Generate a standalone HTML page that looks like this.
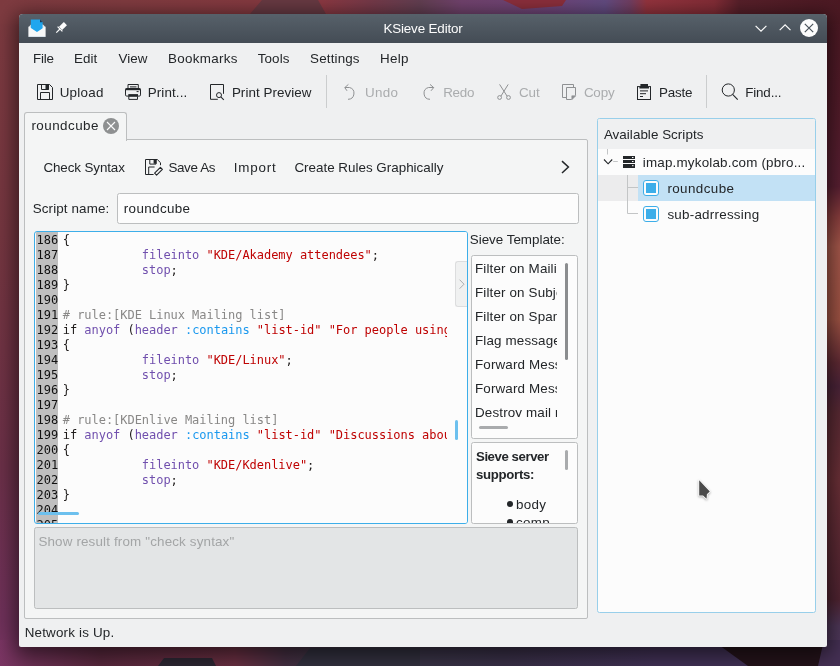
<!DOCTYPE html>
<html>
<head>
<meta charset="utf-8">
<title>KSieve Editor</title>
<style>
html,body{margin:0;padding:0;}
body{width:840px;height:666px;overflow:hidden;position:relative;background:#3a1a28;
 font-family:"Liberation Sans",sans-serif;font-size:13.4px;color:#232629;}
#ui{position:absolute;left:0;top:0;width:840px;height:666px;will-change:transform;}
#wall{position:absolute;left:0;top:0;width:840px;height:666px;}
#win{position:absolute;left:19px;top:14px;width:808px;height:633px;background:#eff0f1;border-radius:4px 4px 2px 2px;
 box-shadow:0 4px 20px 4px rgba(0,0,0,0.55);}
#title{position:absolute;left:19px;top:14px;width:808px;height:29px;border-radius:4px 4px 0 0;
 background:linear-gradient(#57616a,#444c55);}
.t{position:absolute;white-space:nowrap;line-height:16px;font-size:13.4px;}
.dis{color:#aaacae;}
.ic{position:absolute;width:16px;height:16px;overflow:visible;}
.sep{position:absolute;width:1px;background:#cbcdce;}
#panel{position:absolute;left:24px;top:139px;width:562px;height:478px;border:1px solid #bcbebf;border-radius:2px;background:#f4f5f5;}
#tab{position:absolute;left:24px;top:112px;width:101px;height:28px;border:1px solid #bcbebf;border-bottom:none;border-radius:3px 3px 0 0;background:#f4f5f5;}
#editor{position:absolute;left:34px;top:231px;width:432px;height:291px;border:1px solid #3daee9;border-radius:3px;background:#fcfcfc;overflow:hidden;}
#gutter{position:absolute;left:1px;top:0px;width:22px;height:291px;background:#bfbfbf;}
.code{position:absolute;top:1px;font-family:"DejaVu Sans Mono","Liberation Mono",monospace;font-size:12px;line-height:15px;white-space:pre;color:#1f1c1b;}
.code div{height:15px;}
.ln{left:1.5px;color:#111;}
.src{left:27.8px;letter-spacing:-0.04px;}
.kw{color:#7150ae;}.tg{color:#1a98ee;}.st{color:#bf0303;}.cm{color:#898887;}
.box{position:absolute;border:1px solid #bcbebf;border-radius:2.5px;background:#fcfcfc;overflow:hidden;}
.li{position:absolute;left:3px;white-space:nowrap;line-height:16px;font-size:13.4px;letter-spacing:0.15px;}
.sb{position:absolute;background:#8b8d8f;border-radius:2px;}
</style>
</head>

<body>
<svg id="wall" width="840" height="666" viewBox="0 0 840 666">
 <defs>
  <linearGradient id="gl" x1="0" y1="0" x2="0" y2="1">
   <stop offset="0" stop-color="#7e3b40"/><stop offset="0.35" stop-color="#753640"/><stop offset="0.7" stop-color="#6b3048"/><stop offset="0.93" stop-color="#6f315a"/><stop offset="1" stop-color="#7a3563"/>
  </linearGradient>
  <linearGradient id="gt" x1="0" y1="0" x2="1" y2="0">
   <stop offset="0" stop-color="#7e3b40"/><stop offset="0.15" stop-color="#823c41"/><stop offset="0.30" stop-color="#863a41"/>
   <stop offset="0.385" stop-color="#8c3943"/>
   <stop offset="0.44" stop-color="#773a49"/><stop offset="0.50" stop-color="#633f52"/><stop offset="0.55" stop-color="#72436e"/><stop offset="0.66" stop-color="#6e4579"/>
   <stop offset="0.72" stop-color="#634c82"/>
   <stop offset="0.75" stop-color="#723f63"/><stop offset="0.77" stop-color="#95343e"/><stop offset="0.85" stop-color="#842d37"/>
   <stop offset="0.88" stop-color="#58202a"/><stop offset="1" stop-color="#4c1923"/>
  </linearGradient>
  <linearGradient id="gr" x1="0" y1="0" x2="0" y2="1">
   <stop offset="0" stop-color="#4c1923"/><stop offset="0.15" stop-color="#521b29"/><stop offset="0.28" stop-color="#5a2033"/><stop offset="0.325" stop-color="#8a3e3e"/>
   <stop offset="0.37" stop-color="#a6584b"/><stop offset="0.48" stop-color="#9f5344"/><stop offset="0.545" stop-color="#602a34"/><stop offset="0.58" stop-color="#4b2439"/>
   <stop offset="0.62" stop-color="#5a2a34"/><stop offset="0.72" stop-color="#6b3037"/><stop offset="0.90" stop-color="#502432"/><stop offset="0.94" stop-color="#4e3758"/><stop offset="1" stop-color="#4f385e"/>
  </linearGradient>
  <linearGradient id="gb" x1="0" y1="0" x2="1" y2="0">
   <stop offset="0" stop-color="#7a3563"/><stop offset="0.04" stop-color="#6a2f52"/><stop offset="0.12" stop-color="#57273c"/><stop offset="0.28" stop-color="#672e40"/>
   <stop offset="0.34" stop-color="#432e40"/><stop offset="0.42" stop-color="#383544"/><stop offset="0.60" stop-color="#382f46"/><stop offset="0.78" stop-color="#403054"/>
   <stop offset="0.9" stop-color="#403054"/><stop offset="0.965" stop-color="#453054"/><stop offset="1" stop-color="#453054"/>
  </linearGradient>
 </defs>
 <rect x="0" y="0" width="840" height="666" fill="#3a1a28"/>
 <rect x="0" y="0" width="30" height="666" fill="url(#gl)"/>
 <rect x="810" y="0" width="30" height="666" fill="url(#gr)"/>
 <rect x="0" y="0" width="840" height="24" fill="url(#gt)"/>
 <rect x="0" y="640" width="840" height="26" fill="url(#gb)"/>
 <polygon points="262,0 318,0 326,14 250,14" fill="#683a43"/>
 <polygon points="503,0 566,0 562,6 522,9" fill="#8c2f3c"/>
 <polygon points="712,640 824,640 818,666 748,666" fill="#24131a"/>
 <polygon points="158,666 164,658 212,658 216,666" fill="#2c2632"/>
 <polygon points="296,666 310,648 420,648 420,666" fill="#32303e"/>
</svg>
<div id="ui">
<div id="win"></div>
<div id="title"></div>
<!-- toolbar separators -->
<div class="sep" style="left:326px;top:75px;height:33px"></div>
<div class="sep" style="left:706px;top:75px;height:33px"></div>
<!-- tab widget -->
<div id="panel"></div>
<div id="tab"></div>
<!-- script name input -->
<div class="box" style="left:117px;top:193px;width:460px;height:29px"></div>
<!-- editor -->
<div id="editor">
 <div id="gutter"></div>
 <div class="code ln"><div>186</div><div>187</div><div>188</div><div>189</div><div>190</div><div>191</div><div>192</div><div>193</div><div>194</div><div>195</div><div>196</div><div>197</div><div>198</div><div>199</div><div>200</div><div>201</div><div>202</div><div>203</div><div>204</div><div>205</div></div>
 <div class="code src"><div>{</div><div>           <span class="kw">fileinto</span> <span class="st">"KDE/Akademy attendees"</span>;</div><div>           <span class="kw">stop</span>;</div><div>}</div><div> </div><div><span class="cm"># rule:[KDE Linux Mailing list]</span></div><div>if <span class="kw">anyof</span> (<span class="kw">header</span> <span class="tg">:contains</span> <span class="st">"list-id"</span> <span class="st">"For people using Linux"</span>)</div><div>{</div><div>           <span class="kw">fileinto</span> <span class="st">"KDE/Linux"</span>;</div><div>           <span class="kw">stop</span>;</div><div>}</div><div> </div><div><span class="cm"># rule:[KDEnlive Mailing list]</span></div><div>if <span class="kw">anyof</span> (<span class="kw">header</span> <span class="tg">:contains</span> <span class="st">"list-id"</span> <span class="st">"Discussions about Kdenlive"</span>)</div><div>{</div><div>           <span class="kw">fileinto</span> <span class="st">"KDE/Kdenlive"</span>;</div><div>           <span class="kw">stop</span>;</div><div>}</div><div> </div><div> </div></div>
 <div style="position:absolute;left:412px;top:0;width:20px;height:291px;background:#fcfcfc"></div>
 <div style="position:absolute;left:420px;top:188px;width:3px;height:20px;background:#6cc0ee;border-radius:1.5px"></div>
 <div style="position:absolute;left:3px;top:280px;width:41px;height:3px;background:#6cc0ee;border-radius:1.5px"></div>
</div>
<!-- splitter handle -->
<div style="position:absolute;left:455px;top:261px;width:12px;height:46px;border:1px solid #dcddde;border-right:none;border-radius:3px 0 0 3px;background:#f0f1f1;box-sizing:border-box"></div>
<svg class="ic" style="left:457px;top:277px;width:8px;height:14px" viewBox="0 0 8 14"><path d="M2.6 2.7 L7 7.2 L2.6 11.7" fill="none" stroke="#abadaf" stroke-width="1"/></svg>
<!-- template list -->
<div class="box" style="left:471px;top:255px;width:105px;height:182px">
 <div style="position:absolute;left:0;top:0;width:85px;height:161px;overflow:hidden">
  <div class="li" style="top:5px">Filter on Mailing List</div>
  <div class="li" style="top:29px">Filter on Subject</div>
  <div class="li" style="top:53px">Filter on Spamassassin</div>
  <div class="li" style="top:77px">Flag messages</div>
  <div class="li" style="top:101px">Forward Message</div>
  <div class="li" style="top:125px">Forward Message and add copy</div>
  <div class="li" style="top:149px">Destroy mail posted by</div>
 </div>
 <div class="sb" style="left:93px;top:7px;width:3px;height:97px"></div>
 <div class="sb" style="left:7px;top:170px;width:29px;height:3px;background:#a9abad"></div>
</div>
<!-- server supports -->
<div class="box" style="left:471px;top:442px;width:105px;height:80px">
 <div class="li" style="left:4px;top:6px;font-weight:bold;font-size:13.2px;letter-spacing:-0.42px">Sieve server</div>
 <div class="li" style="left:4px;top:24px;font-weight:bold;font-size:13.2px;letter-spacing:-0.3px">supports:</div>
 <div style="position:absolute;left:35px;top:57.5px;width:6px;height:6px;border-radius:3px;background:#232629"></div>
 <div class="li" style="left:44px;top:54px;letter-spacing:0.3px">body</div>
 <div style="position:absolute;left:35px;top:75.5px;width:6px;height:6px;border-radius:3px;background:#232629"></div>
 <div class="li" style="left:44px;top:72px;letter-spacing:0.3px">comp</div>
 <div class="sb" style="left:93px;top:7px;width:3px;height:20px;background:#a9abad"></div>
</div>
<!-- result box -->
<div class="box" style="left:34px;top:527px;width:542px;height:80px;background:#e3e5e6"></div>
<!-- scripts panel -->
<div style="position:absolute;left:597px;top:118px;width:217px;height:493px;border:1px solid #98cfea;border-radius:2.5px;background:#fcfcfc;overflow:hidden;box-sizing:content-box">
 <div style="position:absolute;left:0;top:0;width:218px;height:30px;background:#eff0f1"></div>
 <div style="position:absolute;left:0;top:56px;width:40px;height:26px;background:#ececed"></div>
 <div style="position:absolute;left:40px;top:56px;width:178px;height:26px;background:#c2e1f5"></div>
</div>
<svg id="icons" width="840" height="666" viewBox="0 0 840 666" style="position:absolute;left:0;top:0;pointer-events:none">
 <g fill="none" stroke="#232629" stroke-width="1">
  <!-- save (Upload) -->
  <path d="M37.5 84.5 H49.5 L52.5 87.5 V99.5 H37.5 Z"/>
  <path d="M41.5 85 V89.5 H48.5 V85"/>
  <rect x="45.5" y="84.5" width="3.5" height="5" fill="#232629" stroke="none"/>
  <path d="M40.5 99 V92.5 H49.5 V99"/>
  <!-- print -->
  <path d="M128 88.5 V84.5 H138.3 V88.5"/>
  <path d="M130 86.9 H136.5"/>
  <rect x="125.5" y="88.5" width="15" height="7.6" rx="1.2"/>
  <path d="M125.5 89.3 H140.5" stroke-width="1.8"/>
  <path d="M136.6 91.6 H138.6"/>
  <rect x="128.3" y="94.1" width="9.7" height="2.4" fill="#232629" stroke="none"/>
  <path d="M128.8 96.5 V99.4 H137.5 V96.5"/>
  <!-- print preview -->
  <path d="M217.8 99.3 H210.5 V84.5 H223.5 V93.8"/>
  <circle cx="219" cy="95.1" r="2.5"/>
  <path d="M220.8 96.9 L223.8 99.8" stroke-width="1.1"/>
  <!-- paste -->
  <rect x="637.5" y="86.6" width="13" height="12.9"/>
  <path d="M640.4 84 H648 V87 H649 V88.6 H639.4 V87 H640.4 Z" fill="#232629" stroke="none"/>
  <path d="M640 90.9 H648 M640 93.7 H646 M640 96.5 H643"/>
  <!-- find -->
  <circle cx="728.3" cy="90" r="6.1"/>
  <path d="M732.6 94.4 L737.7 99.7" stroke-width="1.1"/>
  <!-- save as -->
  <path d="M153.6 174.5 H145.5 V159.5 H157.3 L160.5 162.7 V165.2"/>
  <path d="M149.8 160 V164.1 H156 V160"/>
  <rect x="153.6" y="159.5" width="2.9" height="4.2" fill="#232629" stroke="none"/>
  <path d="M148.7 174 V167 H154.6"/>
  <path d="M160.4 167.4 L162.4 169.4 L156.6 175.2 L154.6 173.2 Z" stroke-width="1.1" stroke-linejoin="round"/>
  <!-- panel chevron -->
  <path d="M562 161.1 L568.4 167 L562 173" stroke-width="1.5"/>
  <!-- tree expander -->
  <path d="M604 159.5 L608.1 163.8 L612.2 159.5" stroke-width="1.1"/>
 </g>
 <!-- disabled icons -->
 <g fill="none" stroke="#8f9193" stroke-width="1">
  <path d="M348.4 84.4 L344.8 87.6 L347 90.8"/>
  <path d="M344.8 87.5 H349.5 A6 6 0 0 1 348 99.3"/>
  <path d="M430 84.4 L433.7 87.6 L431 90.8"/>
  <path d="M433.7 87.5 H428.5 A6 6 0 0 0 430 99.3"/>
  <!-- cut -->
  <path d="M499.6 84.4 L507 96 M508.2 84.4 L501 96"/>
  <circle cx="499.6" cy="97.5" r="1.9"/>
  <circle cx="508.5" cy="97.5" r="1.9"/>
  <!-- copy -->
  <path d="M566 97.5 H562.5 V84.5 H573.5 V87"/>
  <path d="M571.5 99.5 H566.5 V87.5 H575.5 V95.5"/>
  <path d="M571.8 99.8 V95.8 H575.8 Z" fill="#8f9193" stroke-width="0.6"/>
 </g>
 <!-- tab close -->
 <circle cx="111" cy="126" r="8" fill="#8e9091"/>
 <path d="M107 122 L115 130 M115 122 L107 130" stroke="#fcfcfc" stroke-width="1.1" fill="none"/>
 <!-- title bar: app icon -->
 <path d="M28.6 27 L31 24.5 H43 L45.4 27 V36.8 H28.6 Z" fill="#e4e6e8"/>
 <path d="M30.8 19.6 H40 L42.6 22.2 V32 H30.8 Z" fill="#1fa6ee"/>
 <path d="M40 19.6 L42.6 22.2 H40 Z" fill="#1d3a55"/>
 <path d="M28.6 26.6 L37 32 L45.4 26.6 V36.8 H28.6 Z" fill="#f7f8f8"/>
 <path d="M28.6 36.3 H45.4 V36.8 H28.6 Z" fill="#c9dcea"/>
 <!-- pin -->
 <g stroke="#fcfcfc" fill="none">
  <path d="M56.3 32.7 L60 29" stroke-width="1.2"/>
  <path d="M57.6 26.6 L62.4 31.4" stroke-width="1.3"/>
  <path d="M60.6 28.4 L65.4 23.6" stroke-width="4.4"/>
 </g>
 <!-- title buttons -->
 <g stroke="#fcfcfc" fill="none" stroke-width="1.2">
  <path d="M755.6 25.8 L761 31.2 L766.4 25.8"/>
  <path d="M779.7 30.2 L785.1 24.8 L790.5 30.2"/>
 </g>
 <circle cx="809" cy="28" r="9" fill="#fcfcfc"/>
 <path d="M804.8 23.8 L813.2 32.2 M813.2 23.8 L804.8 32.2" stroke="#4a535b" stroke-width="1.2" fill="none"/>
 <!-- tree lines -->
 <g stroke="#c3c5c6" stroke-width="1" fill="none">
  <path d="M607.5 149 V154.5 M613.2 161.5 H617.8"/>
  <path d="M627.5 175 V213.5 H638 M627.5 187.5 H638"/>
 </g>
 <!-- server icon -->
 <rect x="623" y="156" width="12" height="12" fill="#232629"/>
 <path d="M623 159.5 H635 M623 163.5 H635" stroke="#fcfcfc" stroke-width="1"/>
 <path d="M632 157.5 H633.5 M632 161.5 H633.5 M632 165.7 H633.5" stroke="#fcfcfc" stroke-width="1"/>
 <!-- checkboxes -->
 <rect x="643.5" y="180.5" width="15" height="15" rx="2.5" fill="#fcfcfc" stroke="#3daee9"/>
 <rect x="646" y="183" width="10" height="10" fill="#3daee9"/>
 <rect x="643.5" y="206.5" width="15" height="15" rx="2.5" fill="#fcfcfc" stroke="#3daee9"/>
 <rect x="646" y="209" width="10" height="10" fill="#3daee9"/>
<!-- mouse cursor -->
 <path d="M699.2 480.3 L709.8 491.5 L706.9 494.2 L706.6 498.7 L703 495.4 H699.2 Z" fill="#4b4b4b" stroke="#ffffff" stroke-width="1.6" stroke-linejoin="round" paint-order="stroke" style="filter:drop-shadow(0 1px 1.2px rgba(0,0,0,0.3))"/>
</svg>

<div class="t" style="left:383.4px;top:21.0px;letter-spacing:-0.142px;color:#fcfcfc">KSieve Editor</div>
<div class="t" style="left:32.9px;top:51.0px;letter-spacing:-0.195px;">File</div>
<div class="t" style="left:73.9px;top:51.0px;letter-spacing:0.105px;">Edit</div>
<div class="t" style="left:118.4px;top:51.0px;letter-spacing:0.051px;">View</div>
<div class="t" style="left:168.1px;top:51.0px;letter-spacing:0.291px;">Bookmarks</div>
<div class="t" style="left:257.7px;top:51.0px;letter-spacing:0.147px;">Tools</div>
<div class="t" style="left:310.1px;top:51.0px;letter-spacing:0.151px;">Settings</div>
<div class="t" style="left:380.1px;top:51.0px;letter-spacing:0.263px;">Help</div>
<div class="t" style="left:59.7px;top:85.0px;letter-spacing:0.260px;">Upload</div>
<div class="t" style="left:147.7px;top:85.0px;letter-spacing:0.125px;">Print...</div>
<div class="t" style="left:231.9px;top:85.0px;letter-spacing:0.047px;">Print Preview</div>
<div class="t dis" style="left:364.9px;top:85.0px;letter-spacing:0.371px;">Undo</div>
<div class="t dis" style="left:443.2px;top:85.0px;letter-spacing:-0.254px;">Redo</div>
<div class="t dis" style="left:518.9px;top:85.0px;letter-spacing:0.052px;">Cut</div>
<div class="t dis" style="left:583.9px;top:85.0px;letter-spacing:-0.191px;">Copy</div>
<div class="t" style="left:658.9px;top:85.0px;letter-spacing:-0.150px;">Paste</div>
<div class="t" style="left:745.2px;top:85.0px;letter-spacing:-0.146px;">Find...</div>
<div class="t" style="left:31.4px;top:118.0px;letter-spacing:0.467px;">roundcube</div>
<div class="t" style="left:43.4px;top:160.0px;letter-spacing:-0.102px;">Check Syntax</div>
<div class="t" style="left:168.4px;top:160.0px;letter-spacing:-0.349px;">Save As</div>
<div class="t" style="left:233.8px;top:160.0px;letter-spacing:0.774px;">Import</div>
<div class="t" style="left:294.4px;top:160.0px;letter-spacing:0.006px;">Create Rules Graphically</div>
<div class="t" style="left:32.7px;top:201.0px;letter-spacing:0.127px;">Script name:</div>
<div class="t" style="left:123.8px;top:201.0px;letter-spacing:0.367px;">roundcube</div>
<div class="t" style="left:469.8px;top:232.0px;letter-spacing:-0.009px;">Sieve Template:</div>
<div class="t" style="left:38.4px;top:534.0px;letter-spacing:0.158px;color:#a3a5a6">Show result from &quot;check syntax&quot;</div>
<div class="t" style="left:24.7px;top:624.5px;letter-spacing:0.188px;">Network is Up.</div>
<div class="t" style="left:603.9px;top:127.0px;letter-spacing:0.044px;">Available Scripts</div>
<div class="t" style="left:642.8px;top:155.0px;letter-spacing:0.193px;">imap.mykolab.com (pbro...</div>
<div class="t" style="left:667.4px;top:181.0px;letter-spacing:0.411px;">roundcube</div>
<div class="t" style="left:667.4px;top:207.0px;letter-spacing:0.244px;">sub-adrressing</div>

</div>
</body>
</html>
